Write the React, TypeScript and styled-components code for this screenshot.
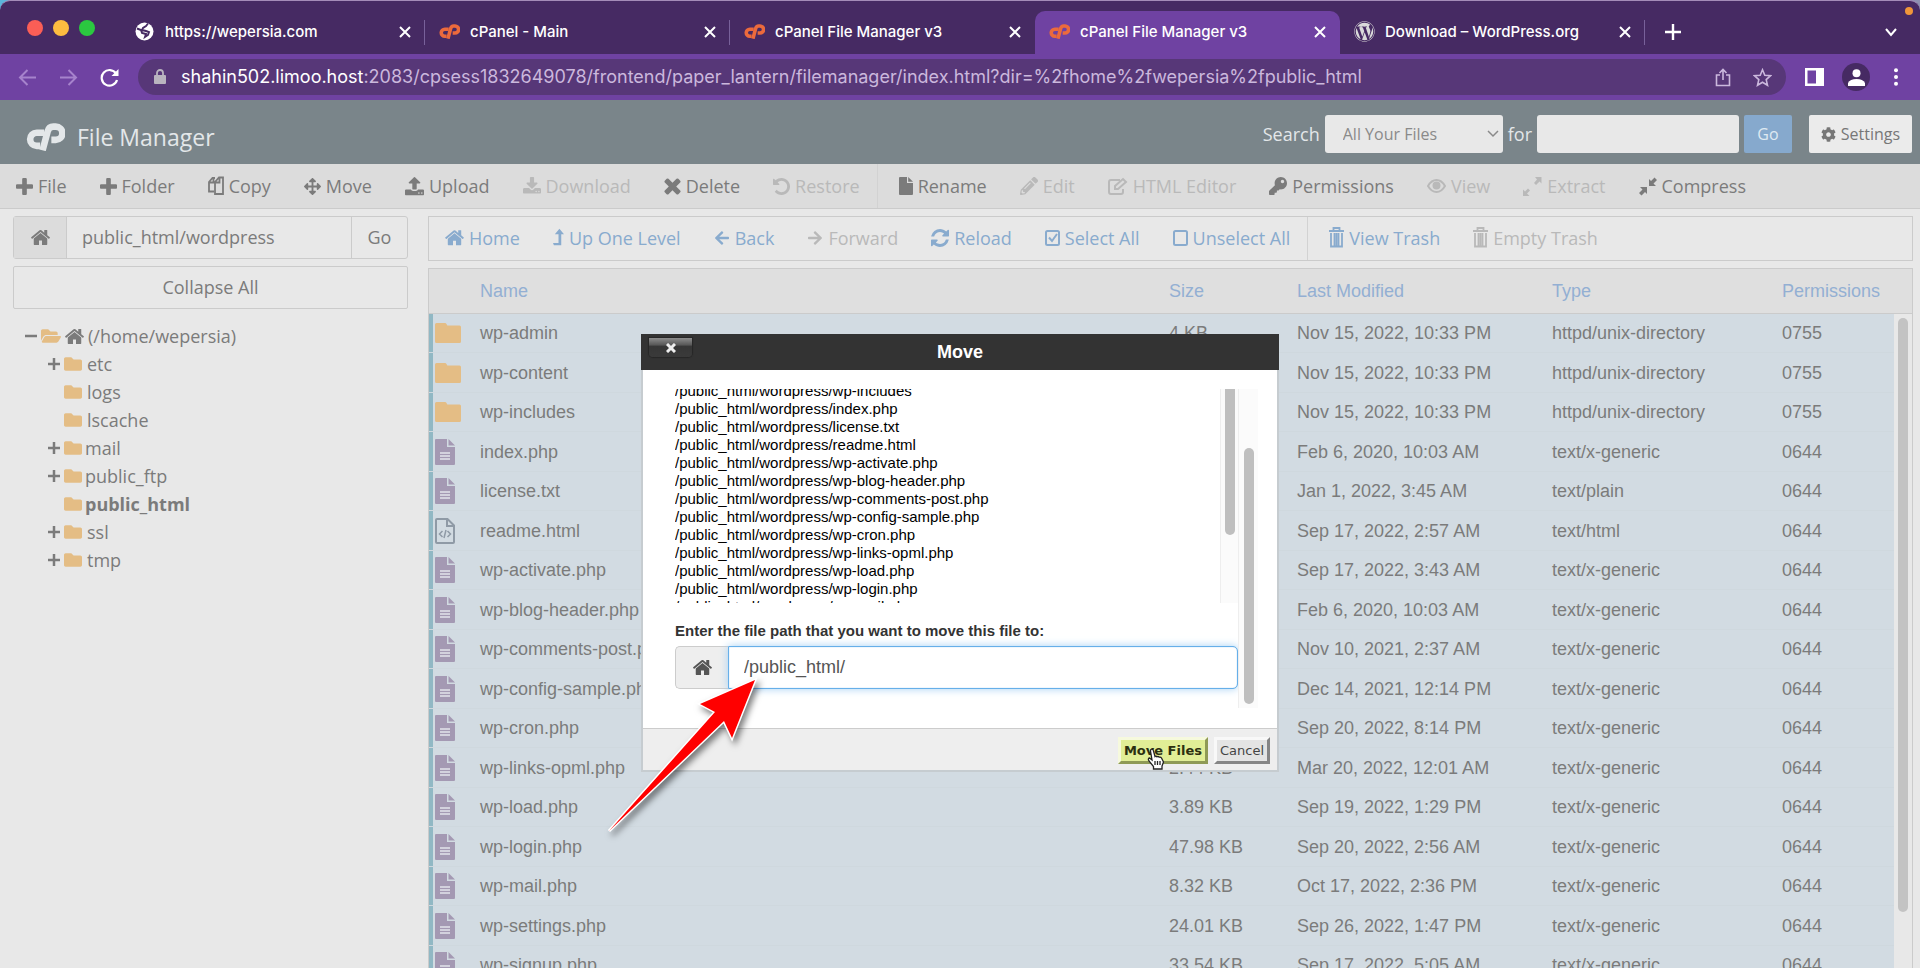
import React from "react";
import styled, { createGlobalStyle, css } from "styled-components";
import {
  FaArrowLeft,
  FaArrowRight,
  FaArrowsAlt,
  FaCog,
  FaFolder,
  FaFolderOpen,
  FaKey,
  FaPencilAlt,
  FaWordpress,
} from "react-icons/fa";

const c = {
  frame: "#462a63",
  bar: "#6f42a2",
  omnibox: "#573778",
  header: "#7a858a",
  tools: "#dcdcdc",
  page: "#e8e8e8",
  line: "#cbcbcb",
  text: "#7b7b7b",
  muted: "#b9b9b9",
  link: "#89abce",
  row: "#d2dbe2",
  folder: "#e4bd85",
  file: "#a499b3",
};
const sans = `"Open Sans", "Noto Sans", sans-serif`;
const arial = `"Liberation Sans", Arial, sans-serif`;
const ui = `Inter, Roboto, sans-serif`;

const Global = createGlobalStyle`
  *, *::before, *::after { box-sizing: border-box; }
  html, body { margin: 0; padding: 0; background: ${c.page}; overflow: hidden; }
  button, input, select { font: inherit; color: inherit; margin: 0; padding: 0; border: 0; background: none; border-radius: 0; outline: 0; }
  button { cursor: pointer; white-space: nowrap; }
  a { text-decoration: none; color: inherit; }
  svg { display: block; flex: none; }
`;

/* ---------- icons ---------- */

const Glyph = ({ d, size = 18, box = "0 0 1792 1792" }: { d: string; size?: number; box?: string }) => (
  <svg width={size} height={size} viewBox={box} fill="currentColor" aria-hidden="true">
    <path d={d} />
  </svg>
);

const homePath =
  "M1472 992v480q0 26-19 45t-45 19h-384v-384h-256v384h-384q-26 0-45-19t-19-45v-480q0-1 .5-3t.5-3l575-474 575 474q1 2 1 6zm223-69l-62 74q-8 9-21 11h-3q-13 0-21-7l-692-577-692 577q-12 8-24 7-13-2-21-11l-62-74q-8-10-7-23.5t11-21.5l719-599q32-26 76-26t76 26l244 204v-195q0-14 9-23t23-9h192q14 0 23 9t9 23v408l219 182q10 8 11 21.5t-7 23.5z";
const plusPath =
  "M1600 736v192q0 40-28 68t-68 28h-416v416q0 40-28 68t-68 28h-192q-40 0-68-28t-28-68v-416h-416q-40 0-68-28t-28-68v-192q0-40 28-68t68-28h416v-416q0-40 28-68t68-28h192q40 0 68 28t28 68v416h416q40 0 68 28t28 68z";
const uploadPath =
  "M1344 1472q0-26-19-45t-45-19-45 19-19 45 19 45 45 19 45-19 19-45zm256 0q0-26-19-45t-45-19-45 19-19 45 19 45 45 19 45-19 19-45zm128-224v320q0 40-28 68t-68 28h-1472q-40 0-68-28t-28-68v-320q0-40 28-68t68-28h427q21 56 70.5 92t110.5 36h256q61 0 110.5-36t70.5-92h427q40 0 68 28t28 68zm-325-648q-17 40-59 40h-256v448q0 26-19 45t-45 19h-256q-26 0-45-19t-19-45v-448h-256q-42 0-59-40-17-39 14-69l448-448q18-19 45-19t45 19l448 448q31 30 14 69z";
const downloadPath =
  "M1344 1344q0-26-19-45t-45-19-45 19-19 45 19 45 45 19 45-19 19-45zm256 0q0-26-19-45t-45-19-45 19-19 45 19 45 45 19 45-19 19-45zm128-224v320q0 40-28 68t-68 28h-1472q-40 0-68-28t-28-68v-320q0-40 28-68t68-28h465l135 136q58 56 136 56t136-56l136-136h464q40 0 68 28t28 68zm-325-569q17 41-14 70l-448 448q-18 19-45 19t-45-19l-448-448q-31-29-14-70 17-39 59-39h256v-448q0-26 19-45t45-19h256q26 0 45 19t19 45v448h256q42 0 59 39z";
const timesPath =
  "M1490 1322q0 40-28 68l-136 136q-28 28-68 28t-68-28l-294-294-294 294q-28 28-68 28t-68-28l-136-136q-28-28-28-68t28-68l294-294-294-294q-28-28-28-68t28-68l136-136q28-28 68-28t68 28l294 294 294-294q28-28 68-28t68 28l136 136q28 28 28 68t-28 68l-294 294 294 294q28 28 28 68z";
const undoPath =
  "M1664 896q0 156-61 298t-164 245-245 164-298 61q-172 0-327-72.5t-264-204.5q-7-10-6.5-22.5t8.5-20.5l137-138q10-9 25-9 16 2 23 12 73 95 179 147t225 52q104 0 198.5-40.5t163.5-109.5 109.5-163.5 40.5-198.5-40.5-198.5-109.5-163.5-163.5-109.5-198.5-40.5q-98 0-188 35.5t-160 101.5l137 138q31 30 14 69-17 40-59 40h-448q-26 0-45-19t-19-45v-448q0-42 40-59 39-17 69 14l130 129q107-101 244.5-156.5t284.5-55.5q156 0 298 61t245 164 164 245 61 298z";
const refreshPath =
  "M1639 1056q0 5-1 7-64 268-268 434.5t-478 166.5q-146 0-282.5-55t-243.5-157l-129 129q-19 19-45 19t-45-19-19-45v-448q0-26 19-45t45-19h448q26 0 45 19t19 45-19 45l-137 137q71 66 161 102t187 36q134 0 250-65t186-179q11-17 53-117 8-23 30-23h192q13 0 22.5 9.5t9.5 22.5zm25-800v448q0 26-19 45t-45 19h-448q-26 0-45-19t-19-45 19-45l138-138q-148-137-349-137-134 0-250 65t-186 179q-11 17-53 117-8 23-30 23h-199q-13 0-22.5-9.5t-9.5-22.5v-7q65-268 270-434.5t480-166.5q146 0 284 55.5t245 156.5l130-129q19-19 45-19t45 19 19 45z";

const Line = ({ size = 18, w = 2, children, width }: { size?: number; w?: number; width?: number; children: React.ReactNode }) => (
  <svg width={width ?? size} height={size} viewBox={`0 0 ${width ?? size} ${size}`} fill="none" stroke="currentColor" strokeWidth={w} aria-hidden="true">
    {children}
  </svg>
);

const CopyIcon = () => (
  <Line width={16} size={20} w={1.8}>
    <path d="M6 15.500H1V6l3.500-4H7M1.500 6.500h4V3M7 6l4-4.500h4V18H7zM7.500 6.500h4V2" />
  </Line>
);
const DocIcon = () => (
  <svg width="14" height="18" viewBox="0 0 14 18" fill="currentColor" aria-hidden="true">
    <path d="M1 0h7v6h6v11q0 1-1 1H1q-1 0-1-1V1q0-1 1-1z" />
    <path d="M9.200 0L14 4.800H9.200z" />
  </svg>
);
const EditIcon = () => (
  <Line width={20} size={19} w={2}>
    <path d="M12 3H3Q1 3 1 5v10q0 2 2 2h10q2 0 2-2v-3" />
    <path d="M7 12V9l8-7 3 3-8 7z" />
  </Line>
);
const EyeIcon = () => (
  <Line width={19} size={18} w={2}>
    <path d="M1 9q3.500-6 8.500-6T18 9q-3.500 6-8.500 6T1 9z" />
    <circle cx="9.500" cy="8.500" r="4" fill="currentColor" stroke="none" />
  </Line>
);
const ExtractIcon = () => (
  <svg width="19" height="19" viewBox="0 0 19 19" fill="currentColor" aria-hidden="true">
    <path d="M12 0h6.500v6.500l-2-2L13 8l-2-2 3-3.500zM0 19v-6.500l2 2 3-3 2 2-3 3 2.500 2.500z" />
  </svg>
);
const CompressIcon = () => (
  <svg width="18" height="19" viewBox="0 0 18 19" fill="currentColor" aria-hidden="true">
    <path d="M10 2v7h7l-2.500-2.500L18 3l-2.500-2.500L12 4zM8 17v-7H1l2.500 2.500L0 16l2.500 2.500L6 15z" />
  </svg>
);
const LevelUpIcon = () => (
  <svg width="11" height="19" viewBox="0 0 12 19" fill="currentColor" aria-hidden="true">
    <path d="M7 0l5 6H9v12H1l-1-2.500h6V6H2z" />
  </svg>
);
const CheckBoxIcon = ({ checked }: { checked?: boolean }) => (
  <Line width={15} size={18} w={2}>
    <rect x="1" y="2" width="13" height="14" rx="1.500" />
    {checked && <path d="M4 8.500l3 3.500L12 5" />}
  </Line>
);
const TrashIcon = () => (
  <Line width={15} size={21} w={1.8}>
    <path d="M0 4h15M4.500 3V1h6v2M2 6v13.500h11V6M5.500 6v13M7.500 6v13M9.500 6v13" />
  </Line>
);
const CpIcon = ({ width }: { width: number }) => (
  <svg width={width} height={width * 0.7} viewBox="0 0 40 28" fill="none" stroke="currentColor" strokeWidth="6.800" aria-hidden="true">
    <path d="M18.500 10h-7.500a6.700 6.700 0 0 0 0 13.500H14.500" />
    <path d="M17 28l5.200-19.500Q23.500 3.700 28 3.700h2.500a6.800 6.800 0 0 1 0 13.600H26" />
  </svg>
);
const GlobeIcon = () => (
  <svg width="19" height="19" viewBox="0 0 19 19" aria-hidden="true">
    <circle cx="9.500" cy="9.500" r="9" fill="#fff" />
    <path d="M2 6.500l4 1.500 1 3 4 1-1 3 3-2 1-3-3-1-4-1 1-2 3-2 2-2.500" fill="none" stroke={c.frame} strokeWidth="1.900" />
  </svg>
);
const FileIcon = () => (
  <svg width="20" height="26" viewBox="0 0 20 26" fill={c.file} aria-hidden="true">
    <path d="M1 0h11v8h8v17q0 1-1 1H1q-1 0-1-1V1q0-1 1-1z" />
    <path d="M13.500 0L20 6.500h-6.500z" />
    <path d="M5 14h10M5 17h10M5 20h10" stroke="#e2e4ec" strokeWidth="1.500" />
  </svg>
);
const CodeFileIcon = () => (
  <svg width="20" height="26" viewBox="0 0 20 26" fill="none" stroke="#8f9aa6" strokeWidth="2" aria-hidden="true">
    <path d="M2 1h10.500L19 7.500V24q0 1-1 1H2q-1 0-1-1V2q0-1 1-1zM12 1v7h7" />
    <path d="M7.500 13L4.500 16l3 3M12.500 13l3 3-3 3M11 12l-2 8" strokeWidth="1.500" />
  </svg>
);

/* ---------- browser chrome ---------- */

const Window = styled.div`
  display: flex;
  flex-direction: column;
  height: 100vh;
  background: ${c.page};
  font: 18px/24px ${sans};
  color: ${c.text};
  overflow: hidden;
`;
const TabStrip = styled.div`
  position: relative;
  flex: none;
  display: flex;
  align-items: stretch;
  height: 54px;
  padding: 10px 18px 0 27px;
  background: ${c.frame};
  border-top: 1px solid #a48cb8;
  border-radius: 10px 10px 0 0;
  font: 500 15px/20px ${ui};
  color: #fff;
`;
const Backdrop = styled.div`
  flex: none;
  background: linear-gradient(90deg, #5bb5dc, #8d8fb0);
`;
const Lights = styled.div`
  display: flex;
  gap: 10px;
  width: 93px;
  padding-top: 9px;
`;
const Light = styled.span<{ $c: string }>`
  width: 16px;
  height: 16px;
  border-radius: 8px;
  background: ${(p) => p.$c};
`;
const Tab = styled.div<{ $active?: boolean; $sep?: boolean }>`
  position: relative;
  flex: 0 1 305px;
  display: flex;
  align-items: center;
  gap: 10px;
  padding: 0 14px 2px;
  border-radius: 10px 10px 0 0;
  ${(p) => p.$active && css`background: ${c.bar};`}
  ${(p) =>
    p.$sep &&
    css`
      &::after {
        content: "";
        position: absolute;
        right: 0;
        top: 9px;
        width: 1px;
        height: 25px;
        background: #78619a;
      }
    `}
`;
const TabIcon = styled.span<{ $kind: string }>`
  display: flex;
  justify-content: center;
  width: 21px;
  color: ${(p) => (p.$kind === "cp" ? "#ec6a3c" : "#dadada")};
`;
const TabTitle = styled.span`
  flex: 1;
  white-space: nowrap;
`;
const IconButton = styled.button`
  display: flex;
  align-items: center;
  justify-content: center;
`;
const NewTab = styled(IconButton)`
  width: 56px;
  padding-bottom: 2px;
`;
const TabMenu = styled(IconButton)`
  margin-left: auto;
  width: 22px;
  padding-bottom: 2px;
`;
const RecordDot = styled.span`
  position: absolute;
  right: 7px;
  top: 6px;
  width: 8px;
  height: 8px;
  border-radius: 4px;
  background: #f0963a;
`;
const NavBar = styled.div`
  flex: none;
  display: flex;
  align-items: center;
  height: 46px;
  padding: 0 18px;
  background: ${c.bar};
  color: #fff;
`;
const NavButtons = styled.div`
  display: flex;
  gap: 22px;
  width: 120px;
  ${IconButton}:nth-child(-n + 2) { color: #a683cc; }
`;
const Omnibox = styled.div`
  flex: 1;
  display: flex;
  align-items: center;
  height: 36px;
  padding: 0 14px 0 16px;
  border-radius: 18px;
  background: ${c.omnibox};
  color: #cbb8dd;
`;
const Address = styled.a`
  flex: 1;
  padding-left: 15px;
  font: 18px/24px ${ui};
  white-space: nowrap;
  b { font-weight: 400; color: #fff; }
`;
const OmniActions = styled.div`
  display: flex;
  gap: 22px;
`;
const BrowserActions = styled.div`
  display: flex;
  align-items: center;
  gap: 18px;
  padding-left: 19px;
`;
const Avatar = styled.span`
  display: flex;
  align-items: flex-end;
  justify-content: center;
  width: 28px;
  height: 28px;
  padding-bottom: 5px;
  border-radius: 14px;
  background: ${c.frame};
`;
const MenuDots = styled.svg`
  margin-left: -4px;
`;

/* ---------- file manager header ---------- */

const Header = styled.header`
  flex: none;
  display: flex;
  align-items: center;
  height: 64px;
  padding: 0 8px 0 26px;
  background: ${c.header};
  color: #e3e7e9;
`;
const Brand = styled.h1`
  display: flex;
  align-items: center;
  gap: 12px;
  margin: 0;
  padding-top: 10px;
  font: 400 23px/32px ${sans};
`;
const SearchForm = styled.form`
  display: flex;
  align-items: center;
  gap: 5px;
  margin-left: auto;
  padding-top: 4px;
`;
const SelectWrap = styled.span`
  position: relative;
  color: #8a8a8a;
  svg {
    position: absolute;
    right: 4px;
    top: 15px;
    pointer-events: none;
  }
`;
const Select = styled.select`
  display: block;
  appearance: none;
  width: 178px;
  height: 38px;
  padding: 0 18px;
  background: ${c.page};
  border-radius: 3px;
  font-size: 16px;
`;
const SearchInput = styled.input`
  width: 202px;
  height: 38px;
  padding: 0 12px;
  background: ${c.page};
  border-radius: 3px;
  color: ${c.text};
  font-size: 16px;
`;
const HeaderButton = styled.button<{ $primary?: boolean }>`
  display: flex;
  align-items: center;
  justify-content: center;
  gap: 5px;
  width: ${(p) => (p.$primary ? 48 : 103)}px;
  height: 38px;
  margin-left: ${(p) => (p.$primary ? 0 : 12)}px;
  border-radius: 2px;
  background: ${(p) => (p.$primary ? "#86a9cd" : "#ebebeb")};
  color: ${(p) => (p.$primary ? "#dfe9f2" : "#777")};
  font-size: 16px;
`;

/* ---------- tool bars ---------- */

const ToolBar = styled.nav`
  flex: none;
  display: flex;
  align-items: center;
  height: 45px;
  background: ${c.tools};
  border-bottom: 1px solid ${c.line};
`;
const Tool = styled.button<{ $sep?: boolean }>`
  display: flex;
  align-items: center;
  gap: 5px;
  height: 44px;
  padding: 0 17px 0 16px;
  &:disabled { color: ${c.muted}; }
  ${(p) => p.$sep && css`border-right: 1px solid #d2d2d2; margin-right: 5px;`}
`;
const ToolIcon = styled.span`
  display: flex;
  justify-content: center;
`;
const Body = styled.div`
  flex: 1;
  min-height: 0;
  display: flex;
  gap: 20px;
  padding: 7px 7px 0 13px;
`;
const Side = styled.aside`
  flex: none;
  width: 395px;
  display: flex;
  flex-direction: column;
`;
const PathForm = styled.form`
  display: flex;
  height: 43px;
  margin-bottom: 7px;
  border: 1px solid ${c.line};
  border-radius: 3px;
`;
const Addon = styled.span`
  display: flex;
  align-items: center;
  justify-content: center;
  width: 53px;
  background: ${c.tools};
  border-right: 1px solid ${c.line};
`;
const PathInput = styled.input`
  flex: 1;
  min-width: 0;
  padding: 0 15px 2px;
`;
const GoButton = styled.button`
  width: 56px;
  padding-bottom: 2px;
  border-left: 1px solid ${c.line};
`;
const CollapseAll = styled.button`
  height: 43px;
  margin-bottom: 13px;
  padding-bottom: 2px;
  border: 1px solid ${c.line};
  border-radius: 2px;
`;
const Tree = styled.ul`
  margin: 0;
  padding: 0 0 0 12px;
  list-style: none;
  ul { margin: 0; padding: 0 0 0 23px; list-style: none; }
`;
const Node = styled.a<{ $current?: boolean }>`
  display: flex;
  align-items: center;
  gap: 3px;
  height: 28px;
  font-weight: ${(p) => (p.$current ? 700 : 400)};
`;
const Sign = styled.span`
  display: flex;
  width: 13px;
`;
const NodeName = styled.span<{ $gap?: boolean }>`
  padding-left: ${(p) => (p.$gap ? 2 : 0)}px;
`;

/* ---------- file list ---------- */

const Main = styled.main`
  flex: 1;
  min-width: 0;
  display: flex;
  flex-direction: column;
  gap: 7px;
`;
const LinkBar = styled(ToolBar)`
  background: none;
  border: 1px solid ${c.line};
  color: ${c.link};
  ${Tool} { height: 43px; padding-bottom: 2px; }
`;
const ListPanel = styled.div`
  position: relative;
  flex: 1;
  min-height: 0;
  overflow: hidden;
  border: 1px solid ${c.line};
  border-bottom: 0;
`;
const Table = styled.table`
  width: 100%;
  table-layout: fixed;
  border-spacing: 0;
  font: 18px/22px ${arial};
  th, td { padding: 0; text-align: left; font-weight: 400; white-space: nowrap; }
  th {
    height: 45px;
    background: #dfdfdf;
    border-bottom: 1px solid ${c.line};
    color: #93afd3;
  }
  td {
    height: 39px;
    background: ${c.row};
    border-bottom: 1px solid #cfd8de;
  }
  tr:nth-child(even) td { height: 40px; }
  td:first-child { padding-left: 6px; box-shadow: inset 4px 0 #91b8c4; }
`;
const ScrollTrack = styled.div`
  position: absolute;
  top: 45px;
  right: 0;
  bottom: 0;
  width: 18px;
  background: ${c.page};
`;
const ScrollThumb = styled.div`
  width: 10px;
  height: 594px;
  margin: 4px auto 0;
  border-radius: 5px;
  background: #c3c3c3;
`;

/* ---------- move dialog ---------- */

const Dialog = styled.section`
  position: fixed;
  top: 334px;
  left: 50%;
  width: 638px;
  margin-left: -319px;
  font: 15px/18px ${arial};
  color: #000;
`;
const DialogTitle = styled.h2`
  display: flex;
  align-items: center;
  justify-content: center;
  height: 36px;
  margin: 0;
  background: #333;
  color: #fff;
  font: 700 18px/20px ${arial};
`;
const DialogClose = styled.button`
  position: absolute;
  left: 8px;
  top: 4px;
  display: flex;
  align-items: center;
  justify-content: center;
  width: 43px;
  height: 19px;
  border-radius: 0 0 4px 4px;
  background: linear-gradient(#8c8c8c, #5a5a5a 35%, #363636 45%, #3a3a3a);
  box-shadow: 0 0 1px 1px #262626;
  color: #eee;
`;
const DialogFrame = styled.div`
  background: #fff;
  border: 2px solid #c6ccd0;
  border-top: 0;
`;
const DialogBody = styled.div`
  display: flex;
  height: 358px;
  padding: 19px 19px 20px 32px;
`;
const DialogContent = styled.div`
  flex: 1;
`;
const PathScroller = styled.div`
  display: flex;
  height: 214px;
  margin-bottom: 19px;
  overflow: hidden;
`;
const PathList = styled.ul`
  flex: 1;
  margin: -7px 0 0;
  padding: 0;
  list-style: none;
`;
const Track = styled.div<{ $wide?: boolean }>`
  width: ${(p) => (p.$wide ? 20 : 18)}px;
  padding: 0 4px;
  background: #fbfbfb;
  border-left: 1px solid #eee;
`;
const Thumb = styled.div<{ $top: number; $h: number; $flat?: boolean }>`
  width: 10px;
  height: ${(p) => p.$h}px;
  margin: ${(p) => p.$top}px auto 0;
  border-radius: ${(p) => (p.$flat ? "0 0 5px 5px" : "5px")};
  background: #bfbfbf;
`;
const Label = styled.label`
  display: block;
  margin-bottom: 6px;
  color: #333;
  font-weight: 700;
`;
const TargetRow = styled.div`
  display: flex;
  height: 43px;
`;
const TargetAddon = styled.span`
  display: flex;
  align-items: center;
  justify-content: center;
  width: 53px;
  background: #eee;
  border: 1px solid #ccc;
  border-right: 0;
  border-radius: 5px 0 0 5px;
  color: #555;
`;
const TargetInput = styled.input`
  flex: 1;
  min-width: 0;
  padding: 0 15px;
  background: #fff;
  border: 1px solid #66afe9;
  border-radius: 0 5px 5px 0;
  box-shadow: 0 0 8px #a5d0f3, inset 0 0 1px #66afe9;
  color: #555;
  font-size: 18px;
`;
const DialogFooter = styled.footer`
  display: flex;
  align-items: center;
  justify-content: flex-end;
  gap: 6px;
  height: 42px;
  padding: 2px 7px 0 0;
  background: #eee;
  border-top: 1px solid #ccc;
`;
const FooterButton = styled.button<{ $primary?: boolean }>`
  height: 27px;
  padding: 0 3px;
  border: 3px solid;
  border-color: ${(p) => (p.$primary ? "#f6f9dd #8f9a55 #8f9a55 #f6f9dd" : "#f8f8f8 #858585 #858585 #f8f8f8")};
  background: ${(p) => (p.$primary ? "#e1ee96" : "#e4e4e4")};
  color: ${(p) => (p.$primary ? "#2c3010" : "#444")};
  font: ${(p) => (p.$primary ? 700 : 400)} 13px/20px "DejaVu Sans", Verdana, sans-serif;
`;
const Pointer = styled.svg`
  position: absolute;
  right: 114px;
  bottom: 2px;
`;
const Arrow = styled.svg`
  position: absolute;
  left: -44px;
  top: 336px;
  overflow: visible;
  pointer-events: none;
  filter: drop-shadow(3px 4px 3px rgba(0, 0, 0, 0.5));
`;

/* ---------- data ---------- */

const tabs = [
  { title: "https://wepersia.com", icon: "globe", sep: true },
  { title: "cPanel - Main", icon: "cp", sep: true },
  { title: "cPanel File Manager v3", icon: "cp" },
  { title: "cPanel File Manager v3", icon: "cp", active: true },
  { title: "Download – WordPress.org", icon: "wp", sep: true },
];

type ToolDef = { name: string; icon: React.ReactNode; off?: boolean; sep?: boolean };
const plus = <Glyph d={plusPath} size={17} box="192 128 1408 1408" />;
const tools: ToolDef[] = [
  { name: "File", icon: plus },
  { name: "Folder", icon: plus },
  { name: "Copy", icon: <CopyIcon /> },
  { name: "Move", icon: <FaArrowsAlt size={17} /> },
  { name: "Upload", icon: <Glyph d={uploadPath} size={19} box="64 64 1664 1664" /> },
  { name: "Download", icon: <Glyph d={downloadPath} box="64 0 1664 1664" />, off: true },
  { name: "Delete", icon: <Glyph d={timesPath} size={17} box="272 336 1248 1248" /> },
  { name: "Restore", icon: <Glyph d={undoPath} size={17} box="128 128 1536 1536" />, off: true, sep: true },
  { name: "Rename", icon: <DocIcon /> },
  { name: "Edit", icon: <FaPencilAlt size={18} />, off: true },
  { name: "HTML Editor", icon: <EditIcon />, off: true },
  { name: "Permissions", icon: <FaKey size={18} /> },
  { name: "View", icon: <EyeIcon />, off: true },
  { name: "Extract", icon: <ExtractIcon />, off: true },
  { name: "Compress", icon: <CompressIcon /> },
];
const links: ToolDef[] = [
  { name: "Home", icon: <Glyph d={homePath} size={19} box="80 64 1632 1632" /> },
  { name: "Up One Level", icon: <LevelUpIcon /> },
  { name: "Back", icon: <FaArrowLeft size={16} /> },
  { name: "Forward", icon: <FaArrowRight size={16} />, off: true },
  { name: "Reload", icon: <Glyph d={refreshPath} box="128 128 1536 1536" /> },
  { name: "Select All", icon: <CheckBoxIcon checked /> },
  { name: "Unselect All", icon: <CheckBoxIcon />, sep: true },
  { name: "View Trash", icon: <TrashIcon /> },
  { name: "Empty Trash", icon: <TrashIcon />, off: true },
];

const tree = [
  { name: "etc", open: true, gap: true },
  { name: "logs", gap: true },
  { name: "lscache", gap: true },
  { name: "mail", open: true },
  { name: "public_ftp", open: true },
  { name: "public_html", current: true },
  { name: "ssl", open: true, gap: true },
  { name: "tmp", open: true, gap: true },
];

const files: string[][] = [
  ["wp-admin", "4 KB", "Nov 15, 2022, 10:33 PM", "httpd/unix-directory", "0755"],
  ["wp-content", "4 KB", "Nov 15, 2022, 10:33 PM", "httpd/unix-directory", "0755"],
  ["wp-includes", "12 KB", "Nov 15, 2022, 10:33 PM", "httpd/unix-directory", "0755"],
  ["index.php", "405 bytes", "Feb 6, 2020, 10:03 AM", "text/x-generic", "0644"],
  ["license.txt", "19.45 KB", "Jan 1, 2022, 3:45 AM", "text/plain", "0644"],
  ["readme.html", "7.22 KB", "Sep 17, 2022, 2:57 AM", "text/html", "0644"],
  ["wp-activate.php", "7.04 KB", "Sep 17, 2022, 3:43 AM", "text/x-generic", "0644"],
  ["wp-blog-header.php", "351 bytes", "Feb 6, 2020, 10:03 AM", "text/x-generic", "0644"],
  ["wp-comments-post.php", "2.28 KB", "Nov 10, 2021, 2:37 AM", "text/x-generic", "0644"],
  ["wp-config-sample.php", "2.93 KB", "Dec 14, 2021, 12:14 PM", "text/x-generic", "0644"],
  ["wp-cron.php", "5.41 KB", "Sep 20, 2022, 8:14 PM", "text/x-generic", "0644"],
  ["wp-links-opml.php", "2.44 KB", "Mar 20, 2022, 12:01 AM", "text/x-generic", "0644"],
  ["wp-load.php", "3.89 KB", "Sep 19, 2022, 1:29 PM", "text/x-generic", "0644"],
  ["wp-login.php", "47.98 KB", "Sep 20, 2022, 2:56 AM", "text/x-generic", "0644"],
  ["wp-mail.php", "8.32 KB", "Oct 17, 2022, 2:36 PM", "text/x-generic", "0644"],
  ["wp-settings.php", "24.01 KB", "Sep 26, 2022, 1:47 PM", "text/x-generic", "0644"],
  ["wp-signup.php", "33.54 KB", "Sep 17, 2022, 5:05 AM", "text/x-generic", "0644"],
];

const moving = [
  "wp-includes",
  "index.php",
  "license.txt",
  "readme.html",
  "wp-activate.php",
  "wp-blog-header.php",
  "wp-comments-post.php",
  "wp-config-sample.php",
  "wp-cron.php",
  "wp-links-opml.php",
  "wp-load.php",
  "wp-login.php",
  "wp-mail.php",
];

const rowIcon = (type: string) =>
  type.startsWith("httpd") ? (
    <svg width="26" height="20" viewBox="0 0 26 20" fill={c.folder} aria-hidden="true">
      <path d="M1.500 0H10q1 0 1.500 1l.8 1.500H24.500Q26 2.500 26 4v14.500q0 1.500-1.500 1.500h-23Q0 20 0 18.500v-17Q0 0 1.500 0z" />
    </svg>
  ) : type === "text/html" ? (
    <CodeFileIcon />
  ) : (
    <FileIcon />
  );

const tabIcon = (kind: string) =>
  kind === "globe" ? <GlobeIcon /> : kind === "cp" ? <CpIcon width={21} /> : <FaWordpress size={21} />;

const renderTools = (items: ToolDef[]) =>
  items.map((t) => (
    <Tool key={t.name} type="button" disabled={t.off} $sep={t.sep}>
      <ToolIcon>{t.icon}</ToolIcon>
      {t.name}
    </Tool>
  ));

export default function App() {
  return (
    <Window>
      <Global />
      <Backdrop>
        <TabStrip>
          <Lights>
            <Light $c="#fb5e56" />
            <Light $c="#fdbc40" />
            <Light $c="#2bc840" />
          </Lights>
          {tabs.map((t, i) => (
            <Tab key={i} $active={t.active} $sep={t.sep}>
              <TabIcon $kind={t.icon}>{tabIcon(t.icon)}</TabIcon>
              <TabTitle>{t.title}</TabTitle>
              <IconButton type="button" aria-label="Close tab">
                <Line size={12} w={2}><path d="M1 1l10 10M11 1L1 11" /></Line>
              </IconButton>
            </Tab>
          ))}
          <NewTab type="button" aria-label="New tab">
            <Line size={16} w={2.400}><path d="M8 0v16M0 8h16" /></Line>
          </NewTab>
          <TabMenu type="button" aria-label="Search tabs">
            <Line size={12} w={2}><path d="M1 3l5 6 5-6" /></Line>
          </TabMenu>
          <RecordDot />
        </TabStrip>
      </Backdrop>
      <NavBar>
        <NavButtons>
          <IconButton type="button" aria-label="Back">
            <Line size={19}><path d="M18 9.500H2M9.500 2L2 9.500 9.500 17" /></Line>
          </IconButton>
          <IconButton type="button" aria-label="Forward">
            <Line size={19}><path d="M1 9.500h16M9.500 2L17 9.500 9.500 17" /></Line>
          </IconButton>
          <IconButton type="button" aria-label="Reload">
            <Line size={19} w={2.200}>
              <path d="M16 5.500A7.800 7.800 0 1 0 17 12" />
              <path d="M18.500 1v7h-7z" fill="currentColor" stroke="none" />
            </Line>
          </IconButton>
        </NavButtons>
        <Omnibox>
          <svg width="12" height="16" viewBox="0 0 12 16" aria-hidden="true">
            <rect x="0" y="6" width="12" height="9" rx="1" fill="#b9b4bf" />
            <path d="M3 7V4a3 3 0 0 1 6 0v3" fill="none" stroke="#b9b4bf" strokeWidth="1.800" />
          </svg>
          <Address href="#">
            <b>shahin502.limoo.host</b>
            :2083/cpsess1832649078/frontend/paper_lantern/filemanager/index.html?dir=%2fhome%2fwepersia%2fpublic_html
          </Address>
          <OmniActions>
            <IconButton type="button" aria-label="Share">
              <Line width={16} size={19} w={1.600}><path d="M5 7H1.500v10.500h13V7H11M8 12V2M4.500 5L8 1.500 11.500 5" /></Line>
            </IconButton>
            <IconButton type="button" aria-label="Bookmark">
              <Line size={19} w={1.600}><path d="M9.500 1.800l2.300 5.400 5.800.5-4.400 3.900 1.300 5.700-5-3-5 3 1.300-5.700L1.400 7.700l5.800-.5z" /></Line>
            </IconButton>
          </OmniActions>
        </Omnibox>
        <BrowserActions>
          <IconButton type="button" aria-label="Side panel">
            <svg width="19" height="18" viewBox="0 0 19 18" fill="#fff" fillRule="evenodd" aria-hidden="true">
              <path d="M0 0h19v18H0zM2.500 2.500v13H11v-13z" />
            </svg>
          </IconButton>
          <IconButton type="button" aria-label="Profile">
            <Avatar>
              <svg width="17" height="17" viewBox="0 0 17 17" fill="#fff" aria-hidden="true">
                <circle cx="8.500" cy="4.200" r="4" />
                <path d="M0 17v-3q2-4 8.500-4t8.500 4v3z" />
              </svg>
            </Avatar>
          </IconButton>
          <IconButton type="button" aria-label="Menu">
            <MenuDots width="18" height="18" viewBox="0 0 18 18" fill="#fff" aria-hidden="true">
              <circle cx="12" cy="2.200" r="2" /><circle cx="12" cy="9" r="2" /><circle cx="12" cy="15.800" r="2" />
            </MenuDots>
          </IconButton>
        </BrowserActions>
      </NavBar>

      <Header>
        <Brand>
          <CpIcon width={39} />
          File Manager
        </Brand>
        <SearchForm>
          <label htmlFor="scope">Search</label>
          <SelectWrap>
            <Select id="scope"><option>All Your Files</option></Select>
            <Line width={12} size={8} w={1.500}><path d="M1 1l5 5 5-5" /></Line>
          </SelectWrap>
          <label htmlFor="query">for</label>
          <SearchInput id="query" type="text" />
          <HeaderButton type="button" $primary>Go</HeaderButton>
          <HeaderButton type="button"><FaCog size={15} /> Settings</HeaderButton>
        </SearchForm>
      </Header>

      <ToolBar>{renderTools(tools)}</ToolBar>

      <Body>
        <Side>
          <PathForm>
            <Addon><Glyph d={homePath} size={21} /></Addon>
            <PathInput aria-label="Folder path" defaultValue="public_html/wordpress" />
            <GoButton type="button">Go</GoButton>
          </PathForm>
          <CollapseAll type="button">Collapse All</CollapseAll>
          <Tree>
            <li>
              <Node href="#">
                <Sign><Line size={12} w={2.500}><path d="M0 6h12" /></Line></Sign>
                <FaFolderOpen color={c.folder} size={20} />
                <Glyph d={homePath} size={21} />
                <NodeName>(/home/wepersia)</NodeName>
              </Node>
              <ul>
                {tree.map((n) => (
                  <li key={n.name}>
                    <Node href="#" $current={n.current}>
                      <Sign>{n.open && <Line size={12} w={2.500}><path d="M0 6h12M6 0v12" /></Line>}</Sign>
                      <FaFolder color={c.folder} size={18} />
                      <NodeName $gap={n.gap}>{n.name}</NodeName>
                    </Node>
                  </li>
                ))}
              </ul>
            </li>
          </Tree>
        </Side>

        <Main>
          <LinkBar>{renderTools(links)}</LinkBar>
          <ListPanel>
            <Table>
              <colgroup>
                <col width="51" />
                <col />
                <col width="128" />
                <col width="255" />
                <col width="230" />
                <col width="130" />
              </colgroup>
              <thead>
                <tr>
                  <th aria-label="Icon" />
                  <th>Name</th>
                  <th>Size</th>
                  <th>Last Modified</th>
                  <th>Type</th>
                  <th>Permissions</th>
                </tr>
              </thead>
              <tbody>
                {files.map((f) => (
                  <tr key={f[0]}>
                    <td>{rowIcon(f[3])}</td>
                    {f.map((v, i) => <td key={i}>{v}</td>)}
                  </tr>
                ))}
              </tbody>
            </Table>
            <ScrollTrack><ScrollThumb /></ScrollTrack>
          </ListPanel>
        </Main>
      </Body>

      <Dialog role="dialog" aria-labelledby="move-title">
        <DialogTitle id="move-title">Move</DialogTitle>
        <DialogClose type="button" aria-label="Close">
          <Line size={10} w={3}><path d="M1 1l8 8M9 1L1 9" /></Line>
        </DialogClose>
        <DialogFrame>
          <DialogBody>
            <DialogContent>
              <PathScroller>
                <PathList>
                  {moving.map((m) => <li key={m}>/public_html/wordpress/{m}</li>)}
                </PathList>
                <Track><Thumb $top={0} $h={146} $flat /></Track>
              </PathScroller>
              <Label htmlFor="target">Enter the file path that you want to move this file to:</Label>
              <TargetRow>
                <TargetAddon><Glyph d={homePath} size={21} /></TargetAddon>
                <TargetInput id="target" defaultValue="/public_html/" />
              </TargetRow>
            </DialogContent>
            <Track $wide><Thumb $top={59} $h={256} /></Track>
          </DialogBody>
          <DialogFooter>
            <FooterButton type="button" $primary>Move Files</FooterButton>
            <FooterButton type="button">Cancel</FooterButton>
          </DialogFooter>
        </DialogFrame>
        <Pointer width="18" height="22" viewBox="0 0 18 22" fill="#fff" stroke="#222" strokeWidth="1.300" aria-hidden="true">
          <path d="M6.500 21v-2.500L2 13q-1.500-2.500.5-3L5 12 3.500 3q0-1.800 1.300-1.800T6.500 3L8 8.500q1-1 2 .3 1.200-.8 2.200.4 1.500-.5 2.300.8L16.500 14 15 18v3z" />
          <path d="M8 13v4M10.500 13v4M13 13v4" />
        </Pointer>
        <Arrow width="160" height="170" viewBox="0 0 160 170" aria-hidden="true">
          <path d="M158 10L103 34l15 8L12 161 127 51l8 17z" fill="#f00" stroke="#fff" strokeWidth="3" paintOrder="stroke" />
        </Arrow>
      </Dialog>
    </Window>
  );
}
